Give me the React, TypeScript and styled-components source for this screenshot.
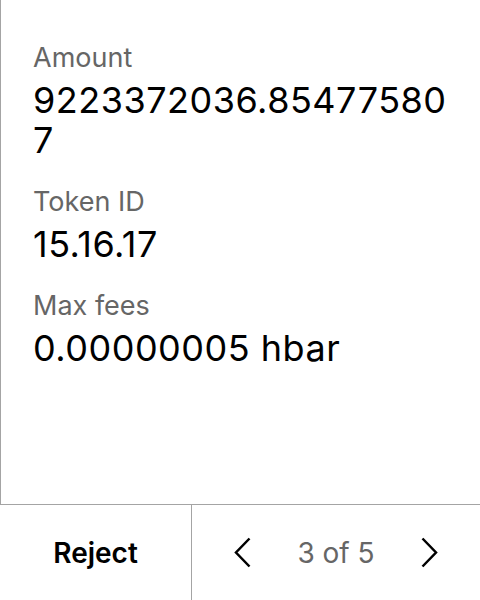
import React from "react";
import styled, { createGlobalStyle } from "styled-components";

const Global = createGlobalStyle`
  html, body { margin: 0; padding: 0; background: #fff; }
  body { font-family: Inter, "Noto Sans", sans-serif; }
  #root { width: 480px; height: 600px; }
`;

const Screen = styled.div`
  width: 480px;
  height: 600px;
  display: flex;
  flex-direction: column;
  box-sizing: border-box;
`;

const Content = styled.div`
  flex: 1;
  border-left: 1px solid #a4a4a4;
  padding: 42px 20px 0 32px;
  display: flex;
  flex-direction: column;
  gap: 26px;
`;

const Field = styled.div`
  display: flex;
  flex-direction: column;
  gap: 6px;
`;

const Label = styled.div`
  font-size: 27px;
  line-height: 32px;
  color: #666;
`;

const Value = styled.div`
  font-size: 36px;
  line-height: 40px;
  letter-spacing: 0.5px;
  color: #000;
  word-break: break-all;
`;

const Footer = styled.div`
  height: 95px;
  border-top: 1px solid #a4a4a4;
  display: grid;
  grid-template-columns: 192px 1fr;
`;

const RejectButton = styled.button`
  border: none;
  border-right: 1px solid #a4a4a4;
  background: none;
  font-family: inherit;
  font-size: 28px;
  font-weight: 600;
  color: #000;
  padding: 0;
  display: flex;
  align-items: center;
  justify-content: center;
`;

const Pager = styled.div`
  display: flex;
  align-items: center;
  justify-content: space-between;
  padding: 0 42px;
`;

const PageText = styled.span`
  font-size: 28px;
  color: #666;
`;

const Arrow = styled.svg`
  width: 17px;
  height: 31px;
  display: block;
`;

const fields = [
  { label: "Amount", value: "9223372036.854775807" },
  { label: "Token ID", value: "15.16.17" },
  { label: "Max fees", value: "0.00000005 hbar" },
];

export default function App() {
  return (
    <>
      <Global />
      <Screen>
        <Content>
          {fields.map((f) => (
            <Field key={f.label}>
              <Label>{f.label}</Label>
              <Value>{f.value}</Value>
            </Field>
          ))}
        </Content>
        <Footer>
          <RejectButton>Reject</RejectButton>
          <Pager>
            <Arrow viewBox="0 0 17 31">
              <path d="M15.5 1.5 L2 15.5 L15.5 29.5" fill="none" stroke="#000" strokeWidth="2.5" />
            </Arrow>
            <PageText>3 of 5</PageText>
            <Arrow viewBox="0 0 17 31">
              <path d="M1.5 1.5 L15 15.5 L1.5 29.5" fill="none" stroke="#000" strokeWidth="2.5" />
            </Arrow>
          </Pager>
        </Footer>
      </Screen>
    </>
  );
}
